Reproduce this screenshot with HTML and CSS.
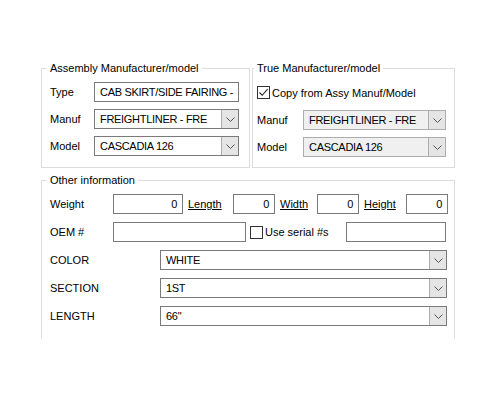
FILE: index.html
```html
<!DOCTYPE html>
<html lang="en">
  <head>
    <meta charset="UTF-8" />
    <title>Part details</title>
    <link rel="stylesheet" href="styles.css">
  </head>
  <body>
    <div class="form">
      <div class="top-row">
        <fieldset class="group group-assy">
          <legend>Assembly Manufacturer/model</legend>
          <div class="field-row">
            <label class="lbl lbl-short">Type</label>
            <div class="textbox wide">CAB SKIRT/SIDE FAIRING -</div>
          </div>
          <div class="field-row">
            <label class="lbl lbl-short">Manuf</label>
            <div class="combo wide">
              <span class="combo-text">FREIGHTLINER - FRE</span>
              <span class="combo-btn"><svg width="9" height="5" viewBox="0 0 9 5"><path d="M0.5 0.5 L4.5 4.5 L8.5 0.5" fill="none" stroke="#555" stroke-width="1"/></svg></span>
            </div>
          </div>
          <div class="field-row">
            <label class="lbl lbl-short">Model</label>
            <div class="combo wide">
              <span class="combo-text">CASCADIA 126</span>
              <span class="combo-btn"><svg width="9" height="5" viewBox="0 0 9 5"><path d="M0.5 0.5 L4.5 4.5 L8.5 0.5" fill="none" stroke="#555" stroke-width="1"/></svg></span>
            </div>
          </div>
        </fieldset>

        <fieldset class="group group-true">
          <legend>True Manufacturer/model</legend>
          <div class="check-row">
            <span class="checkbox"><svg width="11" height="11" viewBox="0 0 11 11"><path d="M1.5 5.5 L4.2 8.3 L9.6 2.2" fill="none" stroke="#222" stroke-width="1.1"/></svg></span>
            <span>Copy from Assy Manuf/Model</span>
          </div>
          <div class="field-row">
            <label class="lbl lbl-short2">Manuf</label>
            <div class="combo wide2 disabled">
              <span class="combo-text">FREIGHTLINER - FRE</span>
              <span class="combo-btn"><svg width="9" height="5" viewBox="0 0 9 5"><path d="M0.5 0.5 L4.5 4.5 L8.5 0.5" fill="none" stroke="#555" stroke-width="1"/></svg></span>
            </div>
          </div>
          <div class="field-row">
            <label class="lbl lbl-short2">Model</label>
            <div class="combo wide2 disabled">
              <span class="combo-text">CASCADIA 126</span>
              <span class="combo-btn"><svg width="9" height="5" viewBox="0 0 9 5"><path d="M0.5 0.5 L4.5 4.5 L8.5 0.5" fill="none" stroke="#555" stroke-width="1"/></svg></span>
            </div>
          </div>
        </fieldset>
      </div>

      <fieldset class="group group-other">
        <legend>Other information</legend>
        <div class="field-row">
          <label class="lbl lbl-mid">Weight</label>
          <div class="textbox num w-weight">0</div>
          <label class="lbl dim dim-length"><u>Length</u></label>
          <div class="textbox num w-dim">0</div>
          <label class="lbl dim dim-width"><u>Width</u></label>
          <div class="textbox num w-dim">0</div>
          <label class="lbl dim dim-height"><u>Height</u></label>
          <div class="textbox num w-dim">0</div>
        </div>
        <div class="field-row">
          <label class="lbl lbl-mid">OEM #</label>
          <div class="textbox w-oem"></div>
          <span class="checkbox serial-check"></span>
          <span class="serial-text">Use serial #s</span>
          <div class="textbox w-serial"></div>
        </div>
        <div class="field-row">
          <label class="lbl lbl-long">COLOR</label>
          <div class="combo full">
            <span class="combo-text">WHITE</span>
            <span class="combo-btn"><svg width="9" height="5" viewBox="0 0 9 5"><path d="M0.5 0.5 L4.5 4.5 L8.5 0.5" fill="none" stroke="#555" stroke-width="1"/></svg></span>
          </div>
        </div>
        <div class="field-row">
          <label class="lbl lbl-long">SECTION</label>
          <div class="combo full">
            <span class="combo-text">1ST</span>
            <span class="combo-btn"><svg width="9" height="5" viewBox="0 0 9 5"><path d="M0.5 0.5 L4.5 4.5 L8.5 0.5" fill="none" stroke="#555" stroke-width="1"/></svg></span>
          </div>
        </div>
        <div class="field-row">
          <label class="lbl lbl-long">LENGTH</label>
          <div class="combo full">
            <span class="combo-text">66"</span>
            <span class="combo-btn"><svg width="9" height="5" viewBox="0 0 9 5"><path d="M0.5 0.5 L4.5 4.5 L8.5 0.5" fill="none" stroke="#555" stroke-width="1"/></svg></span>
          </div>
        </div>
      </fieldset>
    </div>
  </body>
</html>
```

FILE: styles.css
```css
* {
  box-sizing: border-box;
}

body {
  margin: 0;
  background: #ffffff;
  color: #000000;
  font-family: "Liberation Sans", Arial, sans-serif;
  font-size: 11px;
}

.form {
  width: 414px;
  margin-left: 41px;
  padding-top: 61px;
}

.top-row {
  display: flex;
  gap: 2px;
}

.group {
  margin: 0;
  min-width: 0;
  border: 1px solid #dcdcdc;
  padding: 2px 0 0 8px;
}

.group legend {
  padding: 0 3px;
  margin-left: -3px;
  font-size: 11px;
  line-height: 14px;
}

.group-assy {
  width: 209px;
  height: 107px;
  padding-top: 7px;
}

.group-true {
  width: 203px;
  height: 107px;
  padding-left: 4px;
  padding-top: 11px;
}

.group-other {
  margin-top: 5px;
  height: 166px;
  border-bottom: none;
  padding-top: 7px;
}

.field-row {
  display: flex;
  align-items: center;
  height: 20px;
  margin-bottom: 7px;
}

.group-other .field-row {
  margin-bottom: 8px;
}

.lbl {
  flex: none;
}

.lbl-short {
  width: 44px;
}

.lbl-short2 {
  width: 46px;
}

.lbl-mid {
  width: 63px;
}

.lbl-long {
  width: 110px;
}

.dim {
  padding-left: 5px;
}

.dim-length {
  width: 50px;
}

.dim-width {
  width: 42px;
}

.dim-height {
  width: 47px;
}

.textbox,
.combo {
  height: 20px;
  border: 1px solid #7a7a7a;
  background: #ffffff;
  flex: none;
}

.textbox {
  padding: 0 5px;
  line-height: 18px;
  white-space: nowrap;
  overflow: hidden;
  letter-spacing: -0.3px;
}

.num {
  text-align: right;
}

.wide {
  width: 145px;
}

.wide2 {
  width: 143px;
}

.full {
  width: 287px;
}

.w-weight {
  width: 70px;
}

.w-dim {
  width: 42px;
}

.w-oem {
  width: 133px;
}

.w-serial {
  width: 100px;
  margin-left: auto;
  margin-right: 8px;
}

.combo {
  display: flex;
}

.combo.disabled {
  background: #f0f0f0;
  border-color: #adadad;
}

.combo-text {
  flex: 1;
  padding-left: 5px;
  line-height: 18px;
  white-space: nowrap;
  letter-spacing: -0.3px;
}

.combo-btn {
  width: 17px;
  display: flex;
  align-items: center;
  justify-content: center;
  background: #e5e5e5;
  border-left: 1px solid #adadad;
}

.check-row {
  display: flex;
  align-items: center;
  gap: 2px;
  height: 13px;
  margin-bottom: 11px;
}

.checkbox {
  width: 13px;
  height: 13px;
  border: 1px solid #333333;
  background: #ffffff;
  display: flex;
  align-items: center;
  justify-content: center;
  flex: none;
}

.serial-check {
  margin-left: 4px;
}

.serial-text {
  margin-left: 2px;
}
```
